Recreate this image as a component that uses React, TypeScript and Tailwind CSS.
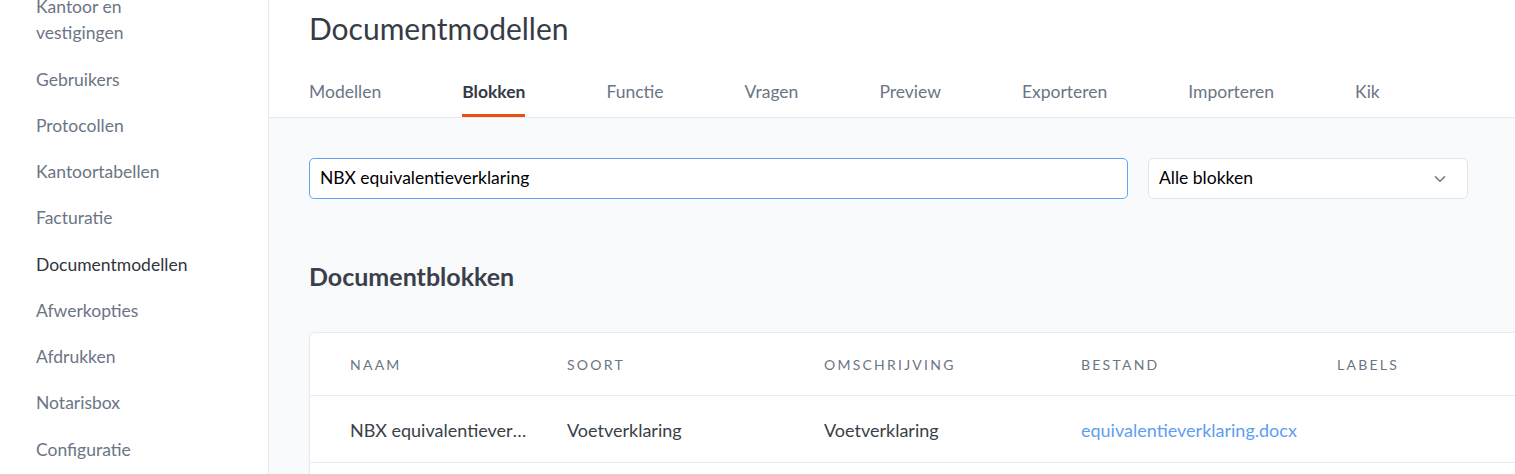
import { ChevronDown } from 'lucide-react';

const sideItems = [
  'Kantoor en vestigingen',
  'Gebruikers',
  'Protocollen',
  'Kantoortabellen',
  'Facturatie',
  'Documentmodellen',
  'Afwerkopties',
  'Afdrukken',
  'Notarisbox',
  'Configuratie',
];

const tabs = ['Modellen', 'Blokken', 'Functie', 'Vragen', 'Preview', 'Exporteren', 'Importeren', 'Kik'];

const columns = ['Naam', 'Soort', 'Omschrijving', 'Bestand', 'Labels'];

const App = () => {
  return (
    <div className="flex h-[474px] w-[1515px] overflow-hidden bg-white font-['Lato','Noto_Sans',sans-serif]">
      {/* sidebar, list scrolled slightly so the first item is cut at the top */}
      <aside className="w-[269px] shrink-0 border-r border-[#e7e9f2] bg-white">
        <ul className="mt-[-6px] flex flex-col gap-[20px] pl-[36px]">
          {sideItems.map((item) => (
            <li
              key={item}
              className={`w-[170px] text-[17.5px] leading-[1.5] ${item === 'Documentmodellen' ? 'text-[#2f3540]' : 'text-[#6b7585]'}`}
            >
              {item}
            </li>
          ))}
        </ul>
      </aside>

      {/* main */}
      <main className="flex min-w-0 flex-1 flex-col overflow-hidden bg-[#f9fafc]">
        <header className="border-b border-[#e7eaf2] bg-white pl-[40px] pt-[10px]">
          <h1 className="text-[30px] leading-[36px] text-[#363b45]">Documentmodellen</h1>
          <nav className="mt-[34px] flex gap-[81px]">
            {tabs.map((tab) => (
              <div
                key={tab}
                className={`border-b-[3px] pb-[10px] text-[17.5px] leading-[24px] ${tab === 'Blokken' ? 'border-[#e8500f] font-bold text-[#343a45]' : 'border-transparent text-[#6b7585]'}`}
              >
                {tab}
              </div>
            ))}
          </nav>
        </header>

        <section className="pl-[40px] pt-[40px]">
          <div className="flex gap-[20px] pr-[47px]">
            <div className="flex h-[41px] flex-1 items-center rounded-[5px] border border-[#64a3f2] bg-white px-[10px] text-[17.5px] text-black">
              NBX equivalentieverklaring
            </div>
            <div className="flex h-[41px] w-[320px] items-center justify-between rounded-[5px] border border-[#dfe4ee] bg-white pl-[10px] pr-[18px] text-[17.5px] text-black">
              <span>Alle blokken</span>
              <ChevronDown className="h-[18px] w-[18px] text-[#6b7585]" strokeWidth={2} />
            </div>
          </div>

          <h2 className="mt-[61px] text-[25px] font-bold leading-[32px] text-[#3a404b]">Documentblokken</h2>

          <div className="mt-[40px] w-[1400px] shrink-0 rounded-tl-[6px] border border-[#e7eaf3] bg-white shadow-[0_1px_3px_rgba(30,40,80,0.05)]">
            <div className="grid h-[63px] grid-cols-[217px_257px_257px_256px_300px] items-center border-b border-[#e8ebf5] pl-[40px]">
              {columns.map((col) => (
                <div key={col} className="text-[14px] uppercase tracking-[0.16em] text-[#6b7585]">
                  {col}
                </div>
              ))}
            </div>
            <div className="grid h-[67px] grid-cols-[217px_257px_257px_256px_300px] items-center border-b border-[#e8ebf5] pl-[40px] pt-[2px] text-[18px] text-[#3a3f48]">
              <div className="truncate pr-[40px]">NBX equivalentieverklaring</div>
              <div>Voetverklaring</div>
              <div>Voetverklaring</div>
              <div className="text-[#5e9ef0]">equivalentieverklaring.docx</div>
              <div />
            </div>
            <div className="h-[40px]" />
          </div>
        </section>
      </main>
    </div>
  );
};

export default App;
